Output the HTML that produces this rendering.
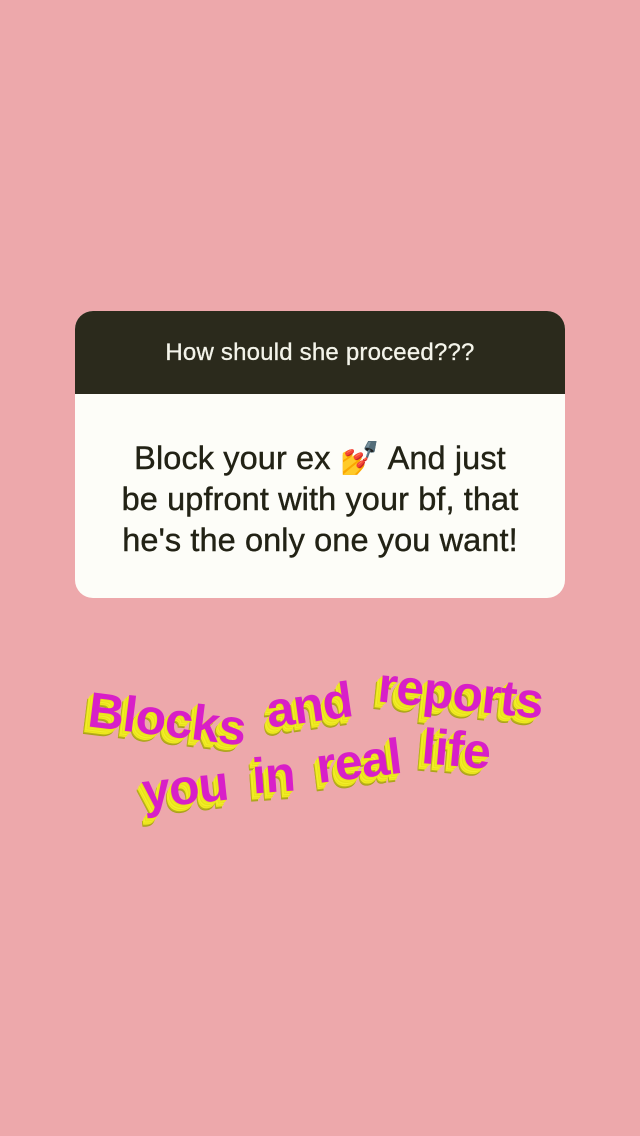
<!DOCTYPE html>
<html><head><meta charset="utf-8"><style>
html,body{margin:0;padding:0}
body{width:640px;height:1136px;background:#eda8ab;position:relative;overflow:hidden;font-family:"Liberation Sans",sans-serif}
.card{position:absolute;left:75px;top:311px;width:490px;height:287px;border-radius:18px;overflow:hidden;background:#fdfdf8}
.hd{height:83px;background:#2b2a1c;color:#f4f4ea;font-size:24px;text-align:center;line-height:84px;letter-spacing:0.2px;-webkit-text-stroke:0.3px #f4f4ea}
.bd{text-align:center;color:#222215;font-size:32.5px;line-height:41px;padding-top:44px;letter-spacing:0.1px;-webkit-text-stroke:0.4px #222215}
.w{position:absolute;font-weight:bold;font-size:50px;color:#d81fc8;white-space:nowrap;letter-spacing:-1px;
text-shadow:-1px 1px 0 #e8e21a,-2px 2px 0 #f0ea20,-3px 3px 0 #e8e21a,-4px 4px 0 #f2ee2a,-4px 5px 0 #e8e21a,-5px 6px 0 #f0ea20,-6px 7px 0 #b9b21a,-6px 8px 0 #a9a21a}
</style></head><body>
<div class="card"><div class="hd">How should she proceed???</div>
<div class="bd">Block your ex 💅 And just<br>be upfront with your bf, that<br>he's the only one you want!</div></div>
<div class="w" style="left:88px;top:690px;transform:rotate(7deg)">Blocks</div>
<div class="w" style="left:266px;top:676px;transform:rotate(-8deg)">and</div>
<div class="w" style="left:378px;top:664px;transform:rotate(6deg)">reports</div>
<div class="w" style="left:142px;top:758px;transform:rotate(-6deg)">you</div>
<div class="w" style="left:252px;top:746px;transform:rotate(-4deg)">in</div>
<div class="w" style="left:316px;top:732px;transform:rotate(-7deg)">real</div>
<div class="w" style="left:422px;top:720px;transform:rotate(5deg)">life</div>
</body></html>
